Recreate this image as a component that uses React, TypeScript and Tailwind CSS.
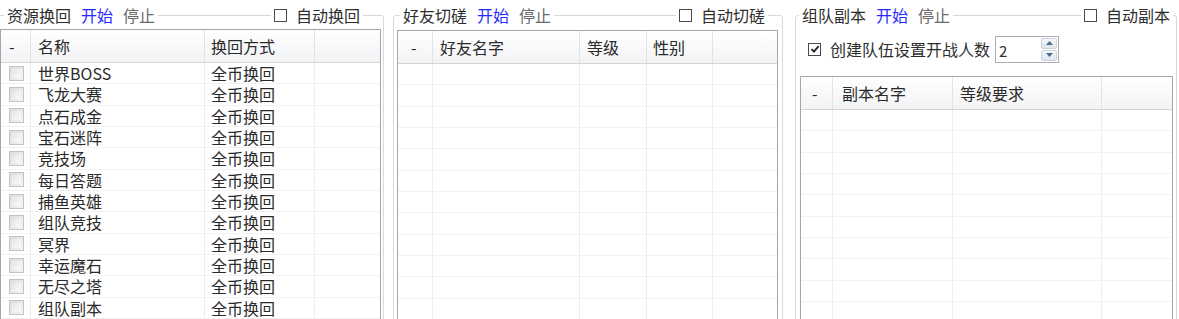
import React from 'react';

const FONT = { fontFamily: '"Noto Sans CJK SC", "Noto Sans", sans-serif' };

const RESOURCES = [
  '世界BOSS',
  '飞龙大赛',
  '点石成金',
  '宝石迷阵',
  '竞技场',
  '每日答题',
  '捕鱼英雄',
  '组队竞技',
  '冥界',
  '幸运魔石',
  '无尽之塔',
  '组队副本',
];

type Col = { label: string; width: string; pad: string };

function Box({ checked = false }: { checked?: boolean }) {
  return (
    <span className="flex h-[13px] w-[13px] flex-shrink-0 items-center justify-center border border-[#4a4a4a] bg-white">
      {checked && (
        <svg viewBox="0 0 10 10" className="h-[10px] w-[10px]">
          <path d="M1.5 5.2 L4 7.6 L8.6 2.2" fill="none" stroke="#222" strokeWidth="1.8" />
        </svg>
      )}
    </span>
  );
}

function RowCheck() {
  return (
    <span className="block h-[15px] w-[15px] border border-[#c4c4c4] bg-gradient-to-br from-[#dcdcdc] to-[#f4f4f4] p-[2px]">
      <span className="block h-full w-full bg-gradient-to-br from-[#e6e6e6] to-[#fafafa]" />
    </span>
  );
}

function GroupHeader({
  title,
  autoLabel,
  titleLeft,
  autoRight,
}: {
  title: string;
  autoLabel: string;
  titleLeft: string;
  autoRight: string;
}) {
  return (
    <>
      <div className={`absolute top-[5px] ${titleLeft} flex h-[20px] items-center gap-[10px] bg-white px-[3px] text-[16px] leading-none`}>
        <span className="text-[#2e2e2e]">{title}</span>
        <span className="text-[#2929ff]">开始</span>
        <span className="text-[#6a6a6a]">停止</span>
      </div>
      <div className={`absolute top-[5px] ${autoRight} flex h-[20px] items-center gap-[9px] bg-white px-[3px] text-[16px] leading-none text-[#2e2e2e]`}>
        <Box />
        <span>{autoLabel}</span>
      </div>
    </>
  );
}

function ListView({
  cols,
  rows,
  width,
}: {
  cols: Col[];
  rows: React.ReactNode[][];
  width: string;
}) {
  const emptyCount = Math.max(0, 13 - rows.length);
  return (
    <div className={`${width} border border-[#a3a6ab] bg-white text-[16px] leading-none text-[#2a2a2a]`}>
      <div className="flex h-[33px] border-b border-[#d6d6d6] bg-gradient-to-b from-white to-[#f2f3f5]">
        {cols.map((c, i) => (
          <div
            key={i}
            className={`flex items-center ${c.width} ${c.pad} ${i < cols.length ? 'border-r border-[#e3e3e3]' : ''}`}
          >
            {c.label}
          </div>
        ))}
        <div className="flex-1" />
      </div>
      {rows.map((r, ri) => (
        <div key={ri} className="flex h-[21.33px] border-b border-[#f1f1f1]">
          {cols.map((c, i) => (
            <div key={i} className={`flex items-center ${c.width} ${c.pad} border-r border-[#ececec]`}>
              {r[i]}
            </div>
          ))}
          <div className="flex-1" />
        </div>
      ))}
      {Array.from({ length: emptyCount }).map((_, ri) => (
        <div key={`e${ri}`} className="flex h-[21.33px] border-b border-[#f1f1f1]">
          {cols.map((c, i) => (
            <div key={i} className={`${c.width} border-r border-[#ececec]`} />
          ))}
          <div className="flex-1" />
        </div>
      ))}
    </div>
  );
}

export default function App() {
  const resourceRows = RESOURCES.map((name) => [
    <RowCheck key="c" />,
    <span key="n">{name}</span>,
    <span key="m">全币换回</span>,
  ]);

  return (
    <div className="flex h-[319px] w-[1179px] overflow-hidden bg-white" style={FONT}>
      {/* 资源换回 */}
      <div className="relative ml-[-4px] w-[388px] flex-shrink-0 pt-[15px]">
        <div className="h-[400px] rounded-[3px] border border-[#d3dadf] pl-[3px] pt-[13px]">
          <ListView
            width="w-[381px]"
            cols={[
              { label: '-', width: 'w-[30px]', pad: 'pl-[8px]' },
              { label: '名称', width: 'w-[174px]', pad: 'pl-[7px]' },
              { label: '换回方式', width: 'w-[110px]', pad: 'pl-[6px]' },
            ]}
            rows={resourceRows}
          />
        </div>
        <GroupHeader title="资源换回" autoLabel="自动换回" titleLeft="left-[8px]" autoRight="right-[21px]" />
      </div>

      {/* 好友切磋 */}
      <div className="relative ml-[9px] w-[390px] flex-shrink-0 pt-[15px]">
        <div className="h-[400px] rounded-[3px] border border-[#d3dadf] pl-[3px] pt-[14px]">
          <ListView
            width="w-[381px]"
            cols={[
              { label: '-', width: 'w-[35px]', pad: 'pl-[13px]' },
              { label: '好友名字', width: 'w-[147px]', pad: 'pl-[7px]' },
              { label: '等级', width: 'w-[67px]', pad: 'pl-[7px]' },
              { label: '性别', width: 'w-[66px]', pad: 'pl-[6px]' },
            ]}
            rows={[]}
          />
        </div>
        <GroupHeader title="好友切磋" autoLabel="自动切磋" titleLeft="left-[7px]" autoRight="right-[15px]" />
      </div>

      {/* 组队副本 */}
      <div className="relative ml-[12px] w-[382px] flex-shrink-0 pt-[15px]">
        <div className="h-[400px] rounded-[3px] border border-[#d3dadf] pl-[4px] pt-[19px]">
          <div className="flex h-[28px] items-center text-[16px] leading-none text-[#2e2e2e]">
            <span className="ml-[8px]">
              <Box checked />
            </span>
            <span className="ml-[9px]">创建队伍设置开战人数</span>
            <div className="ml-[5px] flex h-[27px] w-[64px] border border-[#abadb3] bg-white">
              <span className="flex-1 pl-[3px] pt-[6px] text-[15px]">2</span>
              <div className="flex w-[17px] flex-col gap-[1px] py-[1px] pr-[1px]">
                <div className="flex flex-1 items-center justify-center rounded-[2px] border border-[#c9d3dd] bg-gradient-to-b from-[#f6f8fa] to-[#dfe6ed]">
                  <svg viewBox="0 0 7 4" className="h-[4px] w-[7px]">
                    <path d="M0 4 L3.5 0 L7 4 Z" fill="#4d6a8a" />
                  </svg>
                </div>
                <div className="flex flex-1 items-center justify-center rounded-[2px] border border-[#c9d3dd] bg-gradient-to-b from-[#f6f8fa] to-[#dfe6ed]">
                  <svg viewBox="0 0 7 4" className="h-[4px] w-[7px]">
                    <path d="M0 0 L3.5 4 L7 0 Z" fill="#4d6a8a" />
                  </svg>
                </div>
              </div>
            </div>
          </div>
          <div className="mt-[13px]">
            <ListView
              width="w-[373px]"
              cols={[
                { label: '-', width: 'w-[32px]', pad: 'pl-[11px]' },
                { label: '副本名字', width: 'w-[120px]', pad: 'pl-[9px]' },
                { label: '等级要求', width: 'w-[149px]', pad: 'pl-[7px]' },
              ]}
              rows={[]}
            />
          </div>
        </div>
        <GroupHeader title="组队副本" autoLabel="自动副本" titleLeft="left-[4px]" autoRight="right-[4px]" />
      </div>
    </div>
  );
}
